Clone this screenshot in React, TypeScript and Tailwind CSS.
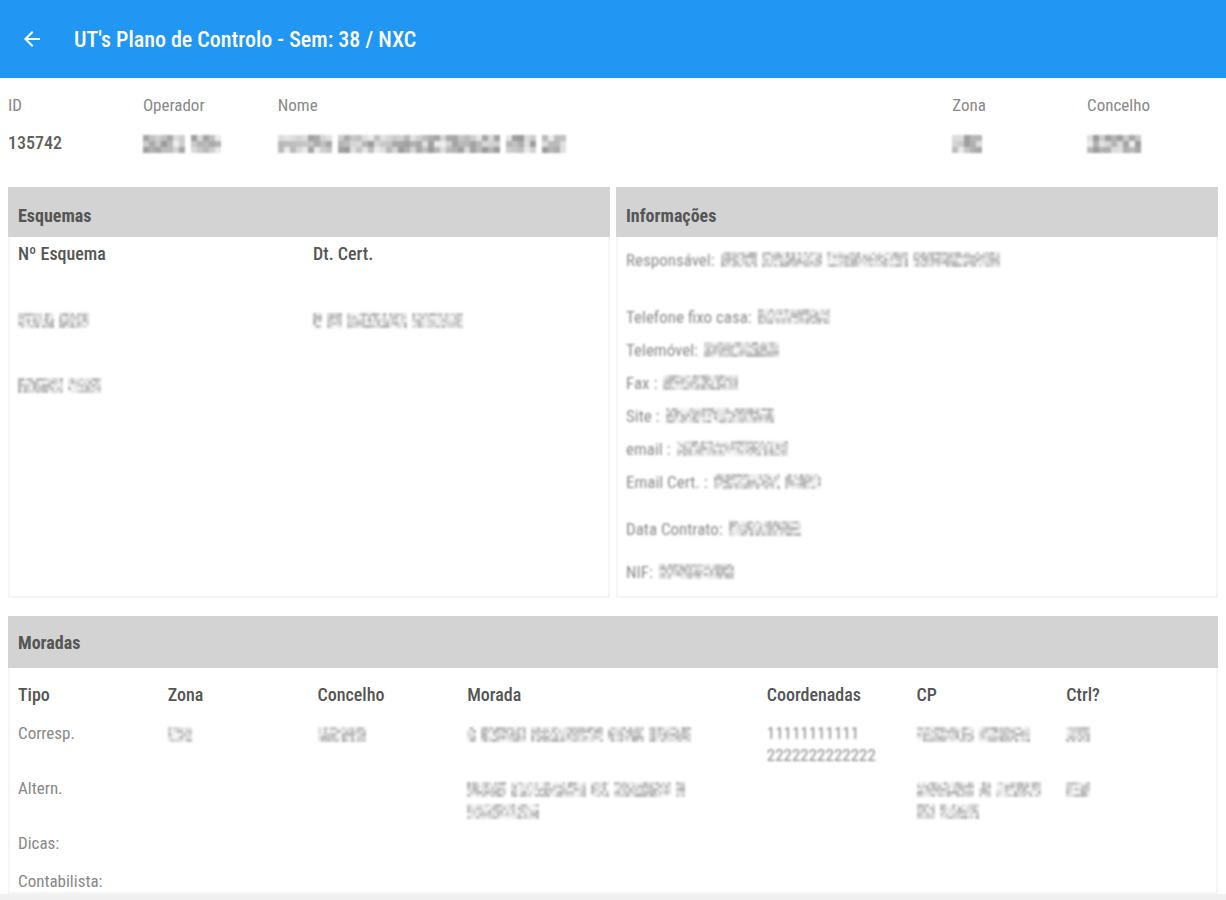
import type { ReactNode } from 'react'

type MaskProps = { words: number[]; seed?: number; strong?: boolean }

// Mosaic that hides a private value. Each word is a width in cells.
function Mask({ words, seed = 1, strong = false }: MaskProps) {
  const cell = strong ? 6 : 3
  const rows = strong ? 3 : 5
  const height = cell * rows
  const cells: ReactNode[] = []
  let x = 0

  words.forEach((word, w) => {
    for (let i = 0; i < word; i++) {
      for (let row = 0; row < rows; row++) {
        const n = Math.abs(Math.sin((x + 1) * 12.9 + row * 78.2 + seed * 37.7) * 4375.5) % 1
        const opacity = strong ? 0.1 + n * 0.5 : 0.02 + n * 0.44
        cells.push(
          <rect key={`${w}-${i}-${row}`} x={x} y={row * cell} width={cell} height={cell} fill="#555" opacity={opacity} />
        )
      }
      x += cell
    }
    x += strong ? 6 : 5
  })

  return (
    <svg width={x} height={height} viewBox={`0 0 ${x} ${height}`} className="inline-block align-middle blur-[1px]" aria-hidden="true">
      {cells}
    </svg>
  )
}

const summary = [
  { label: 'ID', value: '135742', span: '' },
  { label: 'Operador', value: <Mask words={[7, 5]} seed={3} strong />, span: '' },
  { label: 'Nome', value: <Mask words={[9, 27, 5, 4]} seed={5} strong />, span: 'col-span-5' },
  { label: 'Zona', value: <Mask words={[5]} seed={2} strong />, span: '' },
  { label: 'Concelho', value: <Mask words={[9]} seed={8} strong />, span: '' },
]

const info = [
  { label: 'Responsável:', words: [12, 20, 27, 29], gap: 'mb-6' },
  { label: 'Telefone fixo casa:', words: [24], gap: '' },
  { label: 'Telemóvel:', words: [25], gap: '' },
  { label: 'Fax :', words: [25], gap: '' },
  { label: 'Site :', words: [36], gap: '' },
  { label: 'email :', words: [37], gap: '' },
  { label: 'Email Cert. :', words: [22, 12], gap: 'mb-3.5' },
  { label: 'Data Contrato:', words: [24], gap: 'mb-2.5' },
  { label: 'NIF:', words: [25], gap: '' },
]

function Panel({ title, tall, children }: { title: string; tall?: boolean; children: ReactNode }) {
  return (
    <section className="flex flex-col">
      <h2 className={`flex items-center bg-[#d3d3d3] px-2.5 text-[18px] leading-6 font-bold text-[#555] ${tall ? 'h-[52px] pt-0.5' : 'h-[50px] pt-2'}`}>
        {title}
      </h2>
      <div className="grow border-x-2 border-b-2 border-[#f5f5f5] pl-2">{children}</div>
    </section>
  )
}

export default function App() {
  return (
    <div className="min-h-screen bg-white font-['Roboto_Condensed','Liberation_Sans_Narrow',Roboto,sans-serif] text-[17px] leading-[22px] text-[#888]">
      <header className="flex h-[78px] items-center bg-[#2196f3] px-5 text-white">
        <button type="button" aria-label="Voltar" className="mr-[30px]">
          <svg width="24" height="24" viewBox="0 0 24 24" fill="currentColor">
            <path d="M20 11H7.83l5.59-5.59L12 4l-8 8 8 8 1.41-1.41L7.83 13H20v-2z" />
          </svg>
        </button>
        <h1 className="pt-0.5 text-[22px] leading-8 font-medium">UT's Plano de Controlo - Sem: 38 / NXC</h1>
      </header>

      <main className="px-2 pt-4">
        <dl className="-mr-1 grid grid-cols-9">
          {summary.map((item) => (
            <div key={item.label} className={item.span}>
              <dt>{item.label}</dt>
              <dd className="mt-4 h-[22px] text-[18px] font-medium text-[#606060]">{item.value}</dd>
            </div>
          ))}
        </dl>

        <div className="mt-[33px] grid grid-cols-2 gap-1.5">
          <Panel title="Esquemas">
            <table className="mt-1.5 w-full table-fixed text-left">
              <thead>
                <tr className="h-[65px] align-top text-[18px] text-[#555]">
                  <th className="p-0 font-medium">Nº Esquema</th>
                  <th className="p-0 font-medium">Dt. Cert.</th>
                </tr>
              </thead>
              <tbody>
                <tr className="h-[65px] align-top">
                  <td><Mask words={[12, 10]} seed={4} /></td>
                  <td><Mask words={[3, 5, 20, 17]} seed={6} /></td>
                </tr>
                <tr className="h-[65px] align-top">
                  <td><Mask words={[15, 11]} seed={9} /></td>
                  <td />
                </tr>
              </tbody>
            </table>
          </Panel>

          <Panel title="Informações">
            <dl className="pt-1.5 pb-2">
              {info.map((item, i) => (
                <div key={item.label} className={`flex h-[33px] items-center gap-1.5 ${item.gap}`}>
                  <dt className="blur-[1px]">{item.label}</dt>
                  <dd className="flex"><Mask words={item.words} seed={i + 11} /></dd>
                </div>
              ))}
            </dl>
          </Panel>
        </div>

        <div className="mt-[18px]">
          <Panel title="Moradas" tall>
            <table className="mt-4 w-full table-fixed text-left">
              <colgroup>
                <col className="w-1/8" />
                <col className="w-1/8" />
                <col className="w-1/8" />
                <col className="w-1/4" />
                <col className="w-1/8" />
                <col className="w-1/8" />
                <col className="w-1/8" />
              </colgroup>
              <thead>
                <tr className="h-[38px] align-top text-[18px] text-[#555]">
                  <th className="p-0 font-medium">Tipo</th>
                  <th className="p-0 font-medium">Zona</th>
                  <th className="p-0 font-medium">Concelho</th>
                  <th className="p-0 font-medium">Morada</th>
                  <th className="p-0 font-medium">Coordenadas</th>
                  <th className="p-0 font-medium">CP</th>
                  <th className="p-0 font-medium">Ctrl?</th>
                </tr>
              </thead>
              <tbody>
                <tr className="h-[55px] align-top">
                  <th className="p-0 font-normal">Corresp.</th>
                  <td><Mask words={[8]} seed={21} /></td>
                  <td><Mask words={[16]} seed={22} /></td>
                  <td><Mask words={[3, 15, 24, 12, 14]} seed={23} /></td>
                  <td className="blur-[1px]">11111111111<br />2222222222222</td>
                  <td><Mask words={[19, 17]} seed={24} /></td>
                  <td><Mask words={[8]} seed={25} /></td>
                </tr>
                <tr className="h-[55px] align-top">
                  <th className="p-0 font-normal">Altern.</th>
                  <td />
                  <td />
                  <td>
                    <div><Mask words={[13, 25, 6, 19, 3]} seed={26} /></div>
                    <div><Mask words={[24]} seed={27} /></div>
                  </td>
                  <td />
                  <td>
                    <div><Mask words={[19, 4, 15]} seed={28} /></div>
                    <div><Mask words={[6, 13]} seed={29} /></div>
                  </td>
                  <td><Mask words={[8]} seed={30} /></td>
                </tr>
                <tr className="h-[38px] align-top">
                  <th className="p-0 font-normal" colSpan={7}>Dicas:</th>
                </tr>
                <tr className="align-top">
                  <th className="p-0 font-normal" colSpan={7}>Contabilista:</th>
                </tr>
              </tbody>
            </table>
          </Panel>
        </div>
      </main>
      <footer className="h-2 bg-[#f0f0f0]" />
    </div>
  )
}
